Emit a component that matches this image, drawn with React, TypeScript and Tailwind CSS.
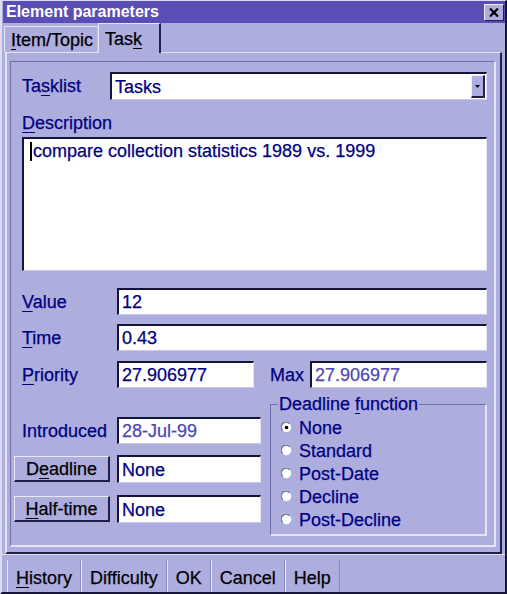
import React from "react";

const FONT = "font-['Liberation_Sans',Arial,Helvetica,sans-serif] [-webkit-text-stroke:0.25px]";

function U({ children }: { children: React.ReactNode }) {
  return <span className="underline decoration-1 underline-offset-[3px]">{children}</span>;
}

function Field({
  value,
  w,
  h = 27,
  disabled = false,
  className = "",
}: {
  value: string;
  w?: string;
  h?: number;
  disabled?: boolean;
  className?: string;
}) {
  return (
    <div
      className={`${w ?? "flex-1"} ${h === 28 ? "h-[28px]" : "h-[27px]"} bg-white border-t-2 border-l-2 border-r border-b border-t-[#14143a] border-l-[#14143a] border-r-[#e4e4f6] border-b-[#c9c9ec] flex items-center pl-[3px] text-[18px] leading-none ${
        disabled ? "text-[#4c47b4]" : "text-[#000080]"
      } ${className}`}
    >
      {value}
    </div>
  );
}

function RaisedButton({ children }: { children: React.ReactNode }) {
  return (
    <div className="w-[96px] h-[26px] bg-[#adadde] border-t border-l border-r-2 border-b-2 border-t-[#e8e8f8] border-l-[#e8e8f8] border-r-[#20204a] border-b-[#20204a] flex items-center justify-center text-[18px] leading-none text-black">
      {children}
    </div>
  );
}

function Radio({ label, checked = false }: { label: string; checked?: boolean }) {
  return (
    <div className="h-[23px] flex items-center">
      <svg width="11" height="11" viewBox="0 0 11 11" className="mr-[7px] ml-[10px]">
        <circle cx="5.5" cy="5.5" r="4.5" fill="#ffffff" />
        <path d="M1.6 8.2 A4.5 4.5 0 0 1 8.2 1.6" stroke="#7a7a9a" strokeWidth="1.4" fill="none" />
        <path d="M8.9 2.6 A4.5 4.5 0 0 1 2.6 8.9" stroke="#ffffff" strokeWidth="1" fill="none" />
        {checked && <circle cx="5.5" cy="5.5" r="1.8" fill="#000000" />}
      </svg>
      <span className="text-[18px] leading-none text-[#000080]">{label}</span>
    </div>
  );
}

export default function App() {
  return (
    <div
      className={`${FONT} w-[507px] h-[594px] bg-[#adadde] flex flex-col border-t border-l-2 border-r-2 border-b-2 border-t-[#dcdcf4] border-l-[#dcdcf4] border-r-[#16163c] border-b-[#16163c] overflow-hidden`}
    >
      {/* caption bar */}
      <div className="h-[22px] ml-px bg-[#5a4db5] flex items-center justify-between pl-[3px] pr-[1px]">
        <span className="text-white font-bold text-[16px] leading-none [-webkit-text-stroke:0px]">Element parameters</span>
        <div className="w-[20px] h-[17px] bg-[#adadde] border-t border-l border-r border-b border-t-[#ececfa] border-l-[#ececfa] border-r-[#20204a] border-b-[#20204a] flex items-center justify-center">
          <svg width="10" height="9" viewBox="0 0 10 9">
            <path d="M1 0.5 L9 8.5 M9 0.5 L1 8.5" stroke="#000000" strokeWidth="2.2" />
          </svg>
        </div>
      </div>

      {/* tab strip */}
      <div className="h-[29px] flex items-end pl-[2px]">
        <div className="h-[26px] w-[94px] border-t border-l border-r border-t-[#e4e4f6] border-l-[#e4e4f6] border-r-[#c8c8ea] flex items-center pl-[6px] text-[18px] leading-none text-black">
          <U>I</U>tem/Topic
        </div>
        <div className="h-[30px] w-[63px] -mb-[1px] relative z-10 bg-[#adadde] border-t border-l border-r-2 border-t-[#e4e4f6] border-l-[#e4e4f6] border-r-[#20204a] flex items-center pl-[6px] text-[18px] leading-none text-black">
          Tas<U>k</U>
        </div>
      </div>

      {/* tab page */}
      <div className="h-[502px] ml-[3px] mr-[3px] border-t border-l-2 border-r-2 border-b-2 border-t-[#e4e4f6] border-l-[#e4e4f6] border-r-[#20204a] border-b-[#20204a] pt-[8px] pl-[3px] pr-[4px] pb-[5px]">
        <div className="h-full border-t border-l border-r-2 border-b-2 border-t-[#7070b0] border-l-[#7070b0] border-r-[#e4e4f6] border-b-[#e4e4f6] pl-[11px] pr-[7px] flex flex-col">
          {/* tasklist */}
          <div className="mt-[10px] h-[28px] flex items-center">
            <span className="w-[88px] text-[18px] leading-none text-[#000080]">
              Ta<U>s</U>klist
            </span>
            <div className="flex-1 h-[28px] bg-white border-t-2 border-l-2 border-r border-b border-t-[#14143a] border-l-[#14143a] border-r-[#e4e4f6] border-b-[#c9c9ec] flex items-center pl-[3px] pr-[1px]">
              <span className="flex-1 text-[18px] leading-none text-[#000080]">Tasks</span>
              <div className="w-[14px] h-[23px] bg-[#adadde] border-t border-l border-r-2 border-b-2 border-t-[#ececfa] border-l-[#ececfa] border-r-[#20204a] border-b-[#20204a] flex items-center justify-center">
                <svg width="5" height="3" viewBox="0 0 5 3">
                  <path d="M0 0 H5 L2.5 3 Z" fill="#000000" />
                </svg>
              </div>
            </div>
          </div>

          {/* description */}
          <div className="mt-[12px] h-[22px] flex items-center text-[18px] leading-none text-[#000080]">
            <U>D</U>escription
          </div>
          <div className="mt-[3px] h-[134px] bg-white border-t-2 border-l-2 border-r border-b border-t-[#14143a] border-l-[#14143a] border-r-[#e4e4f6] border-b-[#c9c9ec] pl-[6px] pt-[2px]">
            <div className="flex items-center h-[20px] text-[18px] leading-none text-[#000080]">
              <span className="w-[2px] h-[19px] bg-black mr-[1px]" />
              compare collection statistics 1989 vs. 1999
            </div>
          </div>

          {/* value / time / priority */}
          <div className="mt-[17px] flex items-center">
            <span className="w-[95px] text-[18px] leading-none text-[#000080]">
              <U>V</U>alue
            </span>
            <Field value="12" />
          </div>
          <div className="mt-[9px] flex items-center">
            <span className="w-[95px] text-[18px] leading-none text-[#000080]">
              <U>T</U>ime
            </span>
            <Field value="0.43" />
          </div>
          <div className="mt-[10px] flex items-center">
            <span className="w-[95px] text-[18px] leading-none text-[#000080]">
              <U>P</U>riority
            </span>
            <Field value="27.906977" w="w-[137px]" />
            <span className="ml-[16px] w-[40px] text-[18px] leading-none text-[#000080]">Max</span>
            <Field value="27.906977" disabled />
          </div>

          {/* dates and deadline function */}
          <div className="mt-[6px] flex">
            <div className="w-[248px] flex flex-col">
              <div className="mt-[23px] flex items-center">
                <span className="w-[95px] text-[18px] leading-none text-[#000080]">Introduced</span>
                <Field value="28-Jul-99" w="w-[144px]" disabled />
              </div>
              <div className="mt-[11px] flex items-center -ml-[8px]">
                <RaisedButton>
                  D<U>e</U>adline
                </RaisedButton>
                <Field value="None" w="w-[144px] ml-[7px]" h={28} />
              </div>
              <div className="mt-[12px] flex items-center -ml-[8px]">
                <RaisedButton>
                  <U>H</U>alf-time
                </RaisedButton>
                <Field value="None" w="w-[144px] ml-[7px]" h={28} />
              </div>
            </div>
            <div className="flex-1 relative pt-[10px]">
              <div className="h-[132px] border-t border-l border-r-2 border-b-2 border-t-[#6c6cb0] border-l-[#6c6cb0] border-r-[#e4e4f6] border-b-[#e4e4f6] pt-[11px] flex flex-col">
                <Radio label="None" checked />
                <Radio label="Standard" />
                <Radio label="Post-Date" />
                <Radio label="Decline" />
                <Radio label="Post-Decline" />
              </div>
              <span className="absolute left-[8px] top-0 px-[1px] bg-[#adadde] text-[18px] leading-[20px] text-[#000080]">
                Deadline <U>f</U>unction
              </span>
            </div>
          </div>
        </div>
      </div>

      {/* command buttons */}
      <div className="flex-1 flex items-stretch pl-[5px] pt-[5px] border-t border-t-[#e4e4f6]">
        {["History", "Difficulty", "OK", "Cancel", "Help"].map((label) => (
          <div
            key={label}
            className="flex items-center pt-[3px] px-[8px] border-l border-r border-l-[#e8e8f8] border-r-[#8c8cc4] text-[18px] leading-none text-black"
          >
            {label === "History" ? (
              <>
                <U>H</U>istory
              </>
            ) : (
              label
            )}
          </div>
        ))}
      </div>
    </div>
  );
}
